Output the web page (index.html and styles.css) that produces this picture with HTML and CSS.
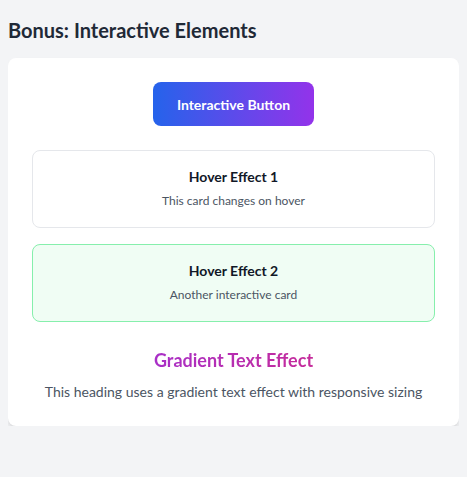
FILE: index.html
```html
<!DOCTYPE html>
<html lang="en">
<head>
<meta charset="utf-8">
<title>Bonus: Interactive Elements</title>
<link rel="stylesheet" href="styles.css">
</head>
<body>
  <section class="section">
    <h2 class="section-title">Bonus: Interactive Elements</h2>
    <div class="panel">
      <div class="btn-row">
        <button class="btn-gradient" type="button">Interactive Button</button>
      </div>
      <div class="hover-card">
        <h3 class="card-title">Hover Effect 1</h3>
        <p class="card-text">This card changes on hover</p>
      </div>
      <div class="hover-card hover-card--green">
        <h3 class="card-title">Hover Effect 2</h3>
        <p class="card-text">Another interactive card</p>
      </div>
      <div class="gradient-block">
        <h3 class="gradient-title">Gradient Text Effect</h3>
        <p class="gradient-text">This heading uses a gradient text effect with responsive sizing</p>
      </div>
    </div>
  </section>
</body>
</html>
```
FILE: styles.css
```css
* { box-sizing: border-box; }
html, body { background: #f3f4f6; }
body {
  margin: 8px;
  font-family: "Lato", "Roboto", sans-serif;
  color: #1f2937;
}
.section-title {
  margin: 0 0 14px;
  padding-top: 8px;
  font-size: 20px;
  line-height: 28px;
  font-weight: 700;
  color: #1f2937;
}
.panel {
  background: #fff;
  border-radius: 8px;
  box-shadow: 0 4px 6px -1px rgba(0,0,0,0.1), 0 2px 4px -2px rgba(0,0,0,0.1);
  padding: 24px;
  display: flex;
  flex-direction: column;
  gap: 16px;
}
.btn-row { display: flex; justify-content: center; margin-bottom: 8px; }
.btn-gradient {
  border: 0;
  border-radius: 8px;
  padding: 12px 24px;
  height: 44px;
  font-family: inherit;
  font-size: 14px;
  font-weight: 700;
  color: #fff;
  background: linear-gradient(90deg, #2563eb, #9333ea);
}
.hover-card {
  border: 1px solid #e5e7eb;
  border-radius: 8px;
  padding: 16px 16px 18px;
  text-align: center;
  background: #fff;
}
.hover-card--green {
  background: #f0fdf4;
  border-color: #86efac;
}
.card-title {
  margin: 0 0 6px;
  font-size: 14px;
  line-height: 20px;
  font-weight: 700;
  color: #111827;
}
.card-text {
  margin: 0;
  font-size: 12px;
  line-height: 16px;
  color: #4b5563;
}
.gradient-block { text-align: center; padding-top: 8px; }
.gradient-title {
  margin: 0 0 8px;
  font-size: 18px;
  line-height: 28px;
  font-weight: 700;
  background: linear-gradient(90deg, #9333ea, #db2777);
  -webkit-background-clip: text;
  background-clip: text;
  color: transparent;
}
.gradient-text {
  margin: 0;
  font-size: 14px;
  line-height: 20px;
  color: #4b5563;
}
```
